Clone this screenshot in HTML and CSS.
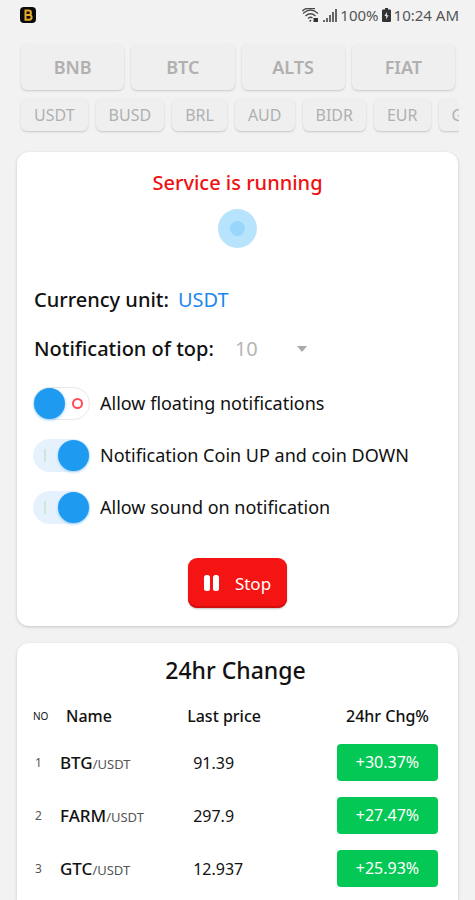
FILE: index.html
```html
<!DOCTYPE html>
<html lang="en">

	<head>
		<meta charset="utf-8">
		<meta name="viewport" content="width=device-width, initial-scale=1">
		<title>24hr Change</title>
		<link rel="stylesheet" href="styles.css">
	</head>

	<body>
		<header class="statusbar">
			<svg class="logo" viewBox="0 0 18 18" role="img" aria-label="App">
				<rect x="1" y="1" width="16" height="16" rx="4" fill="#0b0b0b"/>
				<path d="M6.5 4.5h3.2a2.2 2.2 0 0 1 0 4.4H6.5zM6.500 8.900h3.700a2.400 2.400 0 0 1 0 4.800H6.500zM5.500 4.500h2M5.500 13.700h2" fill="none" stroke="#e5a92c" stroke-width="2"/>
			</svg>
			<div class="status">
				<svg class="wifi" viewBox="0 0 17 15" fill="none" stroke="#4a4a4a" stroke-width="1.300">
					<path d="M1 5.500q7.500-7 15 0M3.500 8q5-4.500 10 0M6 10.500q2.500-2.200 4.500-.5"/>
					<circle cx="8.300" cy="12.800" r="1" fill="#4a4a4a" stroke="none"/>
					<rect x="11.500" y="10" width="4.500" height="4" fill="#333" stroke="none"/>
					<path d="M.5 3q1.500-2 4-2.500H13"/>
				</svg>
				<svg class="signal" viewBox="0 0 15 15" fill="#666">
					<path d="M1 12h2v2H1zM4 10h2v4H4zM7 7h2v7H7zM10 4h2v10h-2zM13 1h2v13h-2z"/>
				</svg>
				<span>100%</span>
				<svg class="battery" viewBox="0 0 9 14">
					<path d="M3 0h3v1.500h2q1 0 1 1V13q0 1-1 1H1q-1 0-1-1V2.500q0-1 1-1h2z" fill="#333"/>
					<path d="M5 4 2.500 8h1.800L4 11.500 6.500 7.300H4.800z" fill="#f2f2f2"/>
				</svg>
				<span>10:24 AM</span>
			</div>
		</header>

		<nav class="markets">
			<button class="market">BNB</button>
			<button class="market">BTC</button>
			<button class="market">ALTS</button>
			<button class="market">FIAT</button>
		</nav>
		<nav class="units">
			<button class="unit">USDT</button>
			<button class="unit">BUSD</button>
			<button class="unit">BRL</button>
			<button class="unit">AUD</button>
			<button class="unit">BIDR</button>
			<button class="unit">EUR</button>
			<button class="unit">GBP</button>
		</nav>

		<main class="cards">
			<section class="card service">
				<h1 class="running">Service is running</h1>
				<div class="pulse"></div>
				<div class="row">
					<span class="caption">Currency unit:</span>
					<a class="currency" href="#">USDT</a>
				</div>
				<div class="row">
					<label class="caption" for="top">Notification of top:</label>
					<span class="picker">
						<select id="top">
							<option>5</option>
							<option selected>10</option>
							<option>20</option>
						</select>
						<svg class="arrow" viewBox="0 0 10 6"><path d="M0 0h10L5 6z" fill="#aaa"/></svg>
					</span>
				</div>
				<div class="options">
					<label class="option"><input class="switch" type="checkbox">Allow floating notifications</label>
					<label class="option"><input class="switch" type="checkbox" checked>Notification Coin UP and coin DOWN</label>
					<label class="option"><input class="switch" type="checkbox" checked>Allow sound on notification</label>
				</div>
				<button class="stop">
					<svg class="pause" viewBox="0 0 16 18" fill="#fff">
						<rect x="0" y="1" width="6" height="16" rx="2.500"/>
						<rect x="9" y="1" width="6" height="16" rx="2.500"/>
					</svg>
					Stop
				</button>
			</section>

			<section class="card change">
				<h2 class="title">24hr Change</h2>
				<table class="coins">
					<thead>
						<tr><th class="no">NO</th><th class="name">Name</th><th class="price">Last price</th><th class="chg">24hr Chg%</th></tr>
					</thead>
					<tbody>
						<tr><td class="no">1</td><td class="name">BTG<small>/USDT</small></td><td class="price">91.39</td><td class="chg"><span class="up">+30.37%</span></td></tr>
						<tr><td class="no">2</td><td class="name">FARM<small>/USDT</small></td><td class="price">297.9</td><td class="chg"><span class="up">+27.47%</span></td></tr>
						<tr><td class="no">3</td><td class="name">GTC<small>/USDT</small></td><td class="price">12.937</td><td class="chg"><span class="up">+25.93%</span></td></tr>
					</tbody>
				</table>
			</section>
		</main>
	</body>
</html>
```
FILE: styles.css
```css
*,
*::before,
*::after {
	box-sizing: border-box;
}
body {
	margin: 0;
	min-height: 100vh;
	display: flex;
	flex-direction: column;
	background-color: #f2f2f2;
	color: #111;
	font-family: "Noto Sans", sans-serif;
	font-size: 18px;
}
button,
select {
	font-family: inherit;
}
.statusbar {
	display: flex;
	justify-content: space-between;
	align-items: center;
	height: 30px;
	padding: 0 16px 0 19px;
	color: #555;
	font-size: 15px;
}
.logo {
	width: 18px;
	height: 18px;
}
.status {
	display: flex;
	align-items: center;
	gap: 3px;
}
.wifi {
	width: 17px;
	height: 15px;
}
.signal {
	width: 15px;
	height: 15px;
}
.battery {
	width: 9px;
	height: 14px;
}
.markets {
	display: flex;
	gap: 7px;
	padding: 14px 20px 0 21px;
}
.market,
.unit {
	border: none;
	border-radius: 6px;
	background-color: #efefef;
	color: #b0b0b0;
	box-shadow: 0 1px 2px #c8c8c8;
}
.market {
	flex: 1;
	height: 46px;
	padding: 0;
	font-size: 18px;
	font-weight: 600;
}
.units {
	display: flex;
	gap: 8px;
	margin-right: 16px;
	padding: 9px 0 4px 21px;
	overflow: hidden;
}
.unit {
	flex: none;
	height: 32px;
	padding: 0 13px;
	font-size: 16px;
}
.cards {
	flex: 1;
	display: flex;
	flex-direction: column;
	gap: 17px;
	padding: 17px 17px 0;
}
.card {
	background-color: #fff;
	border-radius: 12px;
	box-shadow: 0 1px 3px #c4c4c4;
}
.service {
	padding: 17px 16px 18px;
}
.running {
	margin: 0;
	color: #ee1111;
	font-size: 20px;
	font-weight: 500;
	line-height: 28px;
	text-align: center;
}
.pulse {
	width: 39px;
	height: 39px;
	margin: 12px auto 27px;
	border: 12px solid #b8e3fd;
	border-radius: 50%;
	background-color: #98d6fc;
}
.row {
	display: flex;
	align-items: center;
	gap: 9px;
	height: 49px;
	padding-left: 1px;
	font-size: 20px;
}
.caption {
	font-weight: 500;
}
.currency {
	color: #1e88ee;
	text-decoration: none;
}
.picker {
	display: flex;
	align-items: center;
	padding-left: 12px;
}
.picker select {
	appearance: none;
	width: 74px;
	margin-right: -12px;
	padding: 0;
	border: none;
	background: none;
	color: #b5b5b5;
	font-size: 20px;
}
.arrow {
	width: 10px;
	height: 6px;
	pointer-events: none;
}
.options {
	padding-top: 4px;
}
.option {
	display: flex;
	align-items: center;
	gap: 10px;
	height: 52px;
}
.switch {
	appearance: none;
	flex: none;
	display: flex;
	align-items: center;
	justify-content: space-between;
	width: 57px;
	height: 33px;
	margin: 0;
	padding: 0 6px 0 0;
	border: 1px solid #e8e8e8;
	border-radius: 17px;
	background-color: #fff;
}
.switch::before {
	content: "";
	width: 31px;
	height: 31px;
	border-radius: 50%;
	background-color: #1e9af0;
	box-shadow: 0 1px 3px #8fccf8;
}
.switch::after {
	content: "";
	width: 11px;
	height: 11px;
	border: 2px solid #ff4a55;
	border-radius: 50%;
}
.switch:checked {
	flex-direction: row-reverse;
	padding: 0 0 0 10px;
	border-color: #e5f2fd;
	background-color: #e5f2fd;
}
.switch:checked::after {
	width: 2px;
	height: 13px;
	border: none;
	border-radius: 0;
	background-color: #cfe8d4;
}
.stop {
	display: flex;
	align-items: center;
	justify-content: center;
	gap: 15px;
	width: 99px;
	height: 50px;
	margin: 25px auto 0;
	padding: 0;
	border: none;
	border-radius: 9px;
	background-color: #f51414;
	box-shadow: inset 0 -2px 1px #d01010, 0 1px 2px #c4c4c4;
	color: #fff;
	font-size: 17px;
}
.pause {
	width: 16px;
	height: 18px;
}
.change {
	flex: 1;
	padding: 9px 20px 4px 16px;
	border-radius: 12px 12px 0 0;
}
.title {
	margin: 0;
	font-size: 23px;
	font-weight: 500;
	line-height: 36px;
	text-align: center;
}
.coins {
	width: 100%;
	table-layout: fixed;
	border-collapse: collapse;
	font-size: 17px;
}
.coins th {
	height: 48px;
	padding: 8px 0 0;
	font-size: 16px;
	font-weight: 500;
	text-align: left;
}
.coins td {
	height: 53px;
	padding: 0;
}
.coins th.no {
	width: 27px;
	font-size: 10px;
	font-weight: 400;
}
.coins td.no {
	padding-left: 2px;
	color: #555;
	font-size: 12px;
}
.coins th.name {
	padding-left: 6px;
}
.coins td.name {
	font-weight: 500;
}
.name small {
	color: #555;
	font-size: 13px;
	font-weight: 400;
}
.coins .price {
	width: 37%;
}
.coins td.price {
	padding-left: 6px;
	font-size: 16px;
}
.coins .chg {
	width: 101px;
	text-align: center;
}
.up {
	display: block;
	border-radius: 4px;
	background-color: #04c855;
	color: #fff;
	font-size: 16px;
	line-height: 37px;
}
```
